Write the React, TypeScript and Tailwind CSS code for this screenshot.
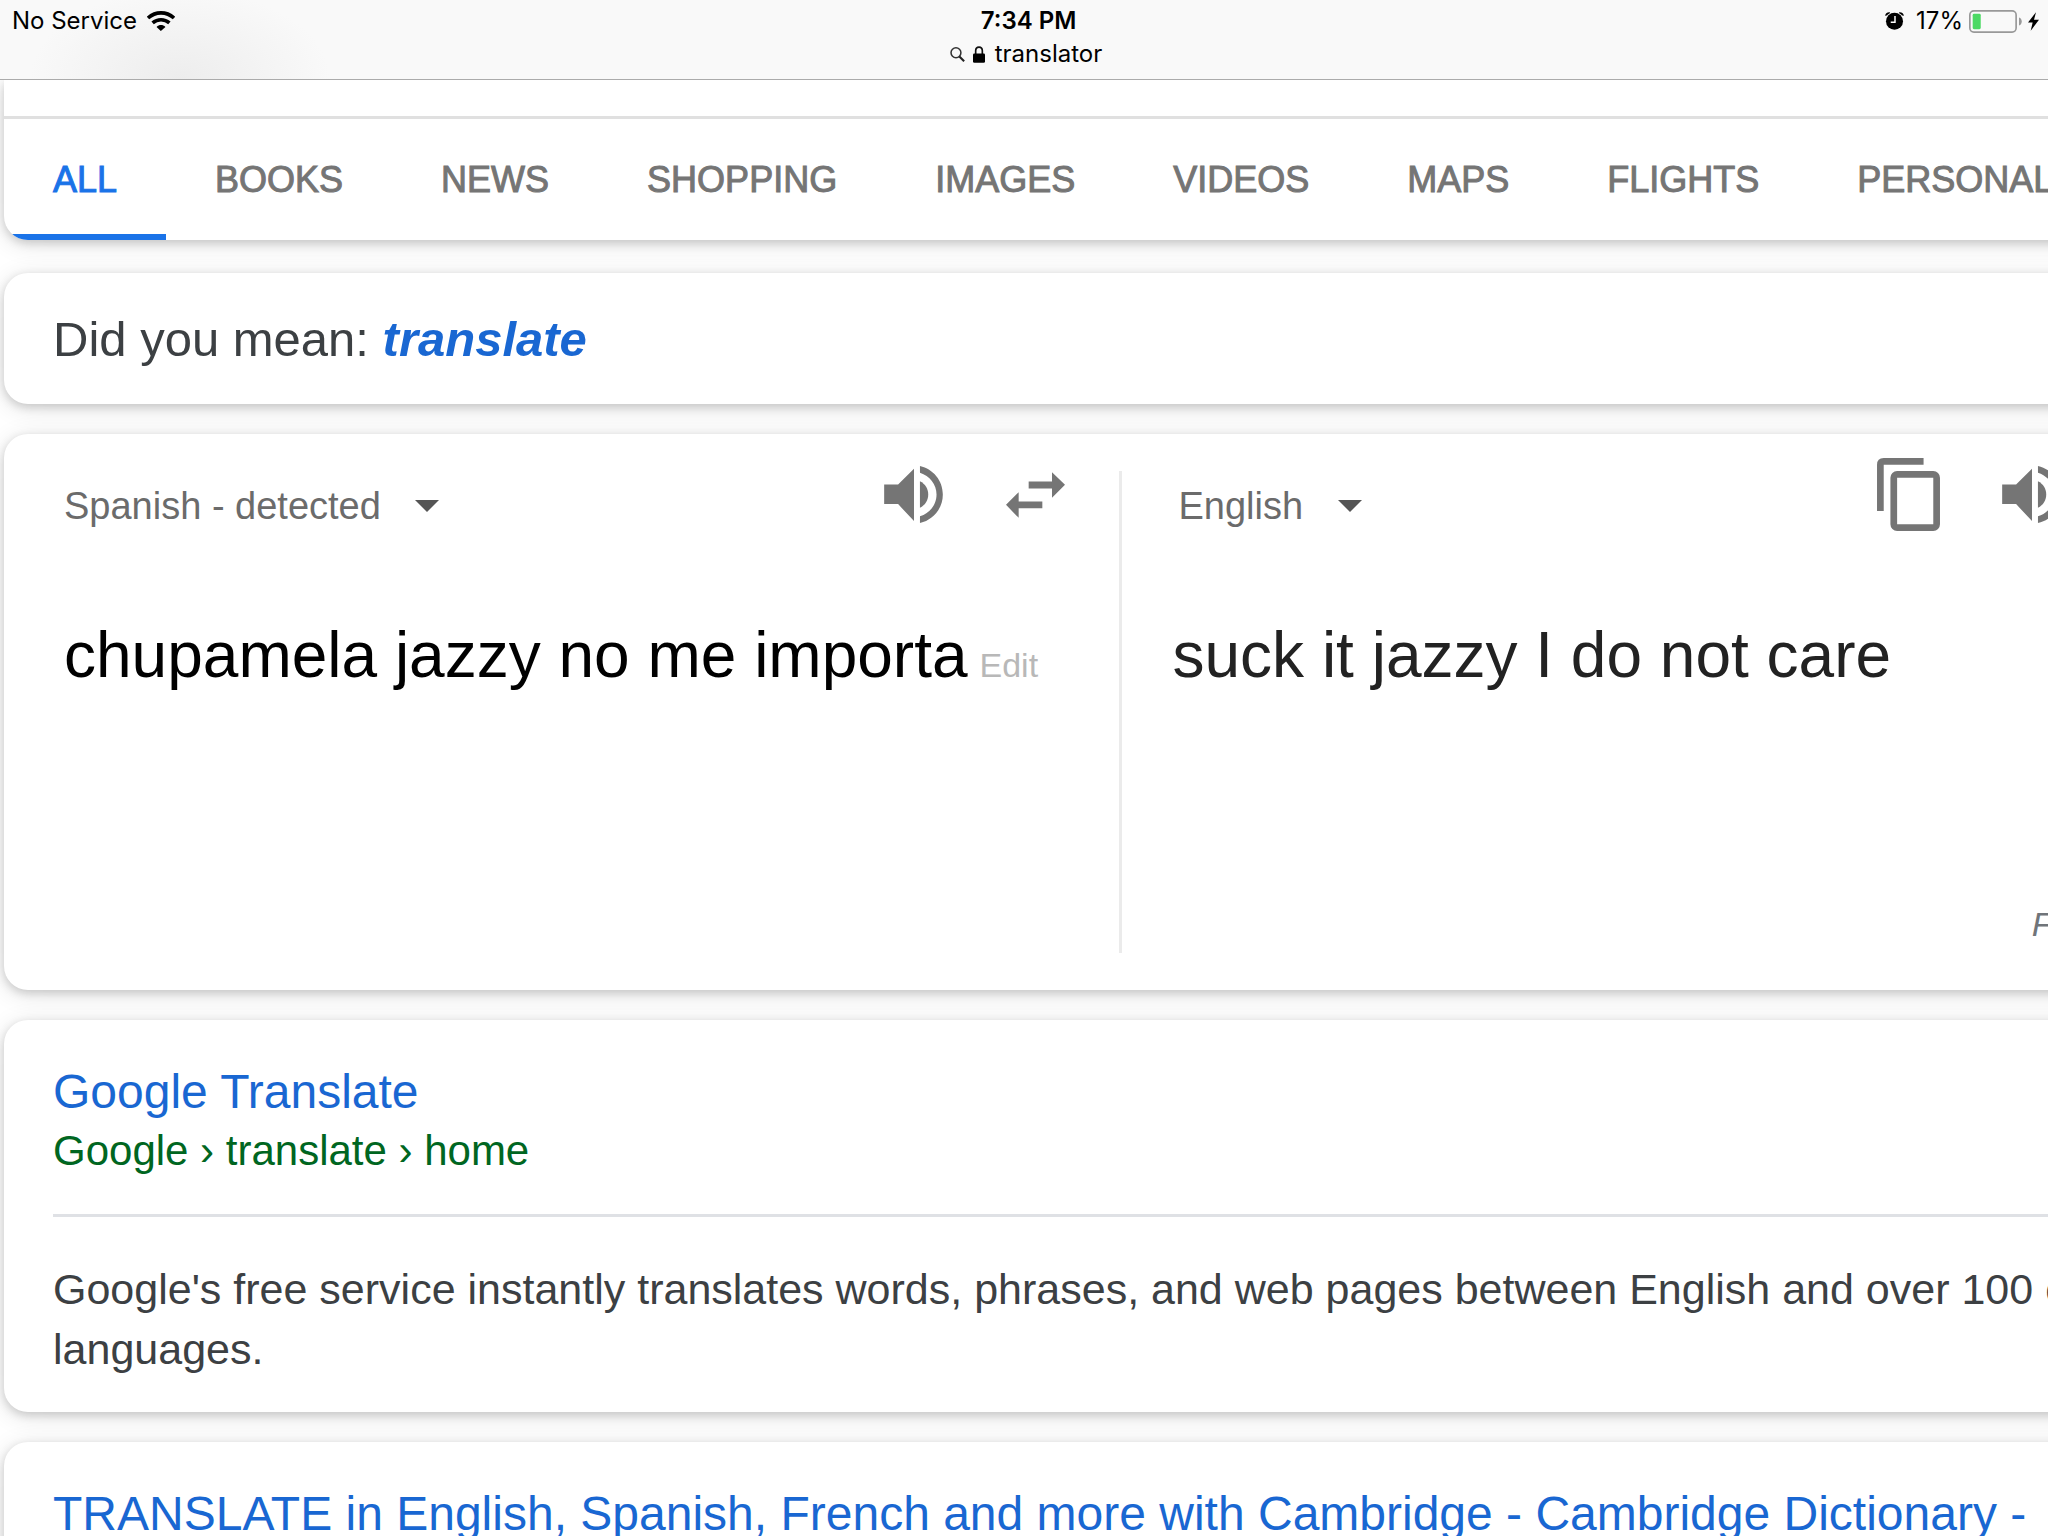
import type { ReactNode } from "react";
import { clsx } from "clsx";

const TABS = [
  "ALL",
  "BOOKS",
  "NEWS",
  "SHOPPING",
  "IMAGES",
  "VIDEOS",
  "MAPS",
  "FLIGHTS",
  "PERSONAL",
];

function WifiIcon() {
  return (
    <svg viewBox="0 0 85 60" className="h-5 w-7" fill="none" aria-hidden="true">
      <path d="M3 21C26 0 59 0 82 21" stroke="#000" strokeWidth="11" />
      <path d="M17 36C32 23 53 23 68 36" stroke="#000" strokeWidth="11" />
      <path d="M29 48C37 40 48 40 56 48L42 60z" fill="#000" />
    </svg>
  );
}

function SearchIcon() {
  return (
    <svg viewBox="0 0 43 44" className="h-[15px] w-[15px]" fill="none" aria-hidden="true">
      <circle cx="17" cy="17" r="14.5" stroke="#333" strokeWidth="4.5" />
      <path d="M27 28L41 42" stroke="#222" strokeWidth="6" />
    </svg>
  );
}

function LockIcon() {
  return (
    <svg viewBox="0 0 36 50" className="h-[17px] w-3" aria-hidden="true">
      <path d="M8 24V14C8 -1 28 -1 28 14V24" fill="none" stroke="#111" strokeWidth="5" />
      <rect y="22" width="36" height="28" rx="4" />
    </svg>
  );
}

function AlarmIcon() {
  return (
    <svg viewBox="0 0 57 55" className="h-[18px] w-[19px]" aria-hidden="true">
      <circle cx="28.5" cy="28.5" r="26" />
      <path d="M0 10C2 4 7 0 14 1L15 3L2 12zM57 10C55 4 50 0 43 1L42 3L55 12z" />
      <path d="M30 12V31H17" fill="none" stroke="#fff" strokeWidth="4.5" />
    </svg>
  );
}

function BatteryIcon() {
  return (
    <svg viewBox="0 0 158 68" className="h-[23px] w-[53px]" aria-hidden="true">
      <rect x="2.5" y="2.5" width="138" height="63" rx="12" fill="none" stroke="#999" strokeWidth="5" />
      <rect x="11" y="11" width="24" height="46" rx="4" fill="#4cd964" />
      <path d="M149 22C160 25 160 43 149 46z" fill="#999" />
    </svg>
  );
}

function BoltIcon() {
  return (
    <svg viewBox="0 0 33 56" className="h-[19px] w-[11px]" aria-hidden="true">
      <path d="M24 0L0 31H14L8 56L33 23H18z" />
    </svg>
  );
}

function SpeakerIcon() {
  return (
    <svg viewBox="0 0 177 172" className="h-[57px] w-[59px]" fill="#757575" aria-hidden="true">
      <path d="M0 56H42L90 8V166L42 115H0z" />
      <path d="M108 46C124 54 133 69 133 86S124 118 108 126z" />
      <path d="M108 0C148 9 177 44 177 86S148 163 108 172V152C137 143 158 117 158 86S137 29 108 20z" />
    </svg>
  );
}

function SwapIcon() {
  return (
    <svg viewBox="0 0 177 137" className="h-[46px] w-[59px]" fill="#757575" aria-hidden="true">
      <path d="M68 28H138V0L177 38L138 77V49H68z" />
      <path d="M109 88H38V60L0 98L38 137V108H109z" />
    </svg>
  );
}

function CopyIcon() {
  return (
    <svg viewBox="0 0 188 218" className="h-[73px] w-[63px]" fill="#757575" aria-hidden="true">
      <path d="M0 158V20Q0 0 20 0H139V20H20V158z" />
      <rect x="50" y="49" width="128" height="159" rx="10" fill="none" stroke="#757575" strokeWidth="20" />
    </svg>
  );
}

function Card({ className, children }: { className?: string; children: ReactNode }) {
  return (
    <section
      className={clsx(
        "w-[calc(100%+188px)] shrink-0 bg-white shadow-[0_4px_24px_rgba(0,0,0,0.12),0_3px_10px_rgba(0,0,0,0.16)]",
        className,
      )}
    >
      {children}
    </section>
  );
}

function LanguageSelect({ label, value }: { label: string; value: string }) {
  return (
    <label className="flex items-center gap-[34px] self-end">
      <select
        aria-label={label}
        className="appearance-none bg-transparent text-[38px] leading-[50px] text-[#6b6b6b]"
      >
        <option>{value}</option>
      </select>
      <svg viewBox="0 0 24 12" className="h-3 w-6" fill="#555" aria-hidden="true">
        <path d="M0 0H24L12 12z" />
      </svg>
    </label>
  );
}

function StatusBar() {
  return (
    <header className="relative z-10 shrink-0 border-b border-[#ababab] bg-[#f9f9f9] bg-[radial-gradient(ellipse_150px_90px_at_180px_100%,#ededed,transparent)] pt-[7px] pb-[11px] font-['Inter',sans-serif] text-2xl leading-7 text-black">
      <div className="grid grid-cols-[1fr_auto_1fr] items-center pr-[9px] pl-3">
        <div className="flex items-center gap-2.5">
          <span>No Service</span>
          <WifiIcon />
        </div>
        <span className="pl-1.5 font-semibold">7:34 PM</span>
        <div className="flex items-center justify-end gap-[6px]">
          <AlarmIcon />
          <span className="pl-1.5">17%</span>
          <BatteryIcon />
          <BoltIcon />
        </div>
      </div>
      <div className="mt-[5px] flex items-center justify-center pl-1">
        <SearchIcon />
        <span className="pr-2.5 pl-2">
          <LockIcon />
        </span>
        <span>translator</span>
      </div>
    </header>
  );
}

export default function App() {
  return (
    <div className="flex h-screen flex-col overflow-hidden bg-white font-['Liberation_Sans',Arial,sans-serif]">
      <StatusBar />

      <main className="flex flex-1 flex-col gap-[30px] pl-1">
        <Card className="overflow-hidden rounded-bl-3xl">
          <div className="box-content h-9 border-b-3 border-[#e0e0e0]" />
          <nav className="flex text-4xl">
            {TABS.map((tab, i) => (
              <a
                key={tab}
                href="#"
                className={clsx(
                  "border-b-6 px-[49px] pt-[37px] pb-[30px] leading-12 whitespace-nowrap [-webkit-text-stroke:1px]",
                  i === 0 ? "border-[#1a73e8] text-[#1a73e8]" : "border-transparent text-[#757575]",
                )}
              >
                {tab}
              </a>
            ))}
          </nav>
        </Card>

        <Card className="mt-[3px] rounded-l-3xl px-[49px] pt-9 pb-[35px]">
          <p className="text-[49px] leading-[60px] text-[#3c4043]">
            Did you mean:{" "}
            <a href="#" className="font-bold text-[#1967d2] italic">
              translate
            </a>
          </p>
        </Card>

        <Card className="grid min-h-[556px] grid-cols-[1fr_3px_1fr] rounded-l-3xl">
          <div className="pt-6 pr-[54px] pl-[60px]">
            <div className="flex h-[73px] items-center gap-[63px]">
              <LanguageSelect label="Source language" value="Spanish - detected" />
              <button type="button" aria-label="Listen" className="ml-auto">
                <SpeakerIcon />
              </button>
              <button type="button" aria-label="Swap languages">
                <SwapIcon />
              </button>
            </div>
            <p className="mt-[84px] text-[64px] leading-20 whitespace-nowrap text-black">
              chupamela jazzy no me importa
              <button type="button" className="ml-3 text-[34px] text-[#b8b8b8]">
                Edit
              </button>
            </p>
          </div>
          <div className="my-[37px] bg-[#ebebeb]" />
          <div className="flex flex-col pt-6 pb-[46px] pl-[51px]">
            <div className="flex h-[73px] items-center gap-[62px] pr-[175px] pl-1.5">
              <LanguageSelect label="Target language" value="English" />
              <button type="button" aria-label="Copy" className="ml-auto">
                <CopyIcon />
              </button>
              <button type="button" aria-label="Listen">
                <SpeakerIcon />
              </button>
            </div>
            <p className="mt-[84px] text-[64px] leading-20 text-[#222]">
              suck it jazzy I do not care
            </p>
            <a
              href="#"
              className="mt-auto mr-[55px] self-end text-[34px] leading-10 text-[#70757a] italic"
            >
              Feedback
            </a>
          </div>
        </Card>

        <Card className="rounded-l-3xl px-[49px] pt-[41px] pb-[33px]">
          <a href="#" className="block">
            <h3 className="text-5xl leading-[62px] text-[#1967d2]">Google Translate</h3>
            <p className="text-[42px] leading-14 text-[#006621]">Google › translate › home</p>
          </a>
          <hr className="mt-[35px] border-t-3 border-[#dfe1e5]" />
          <p className="mt-[42px] text-[43px] leading-[60px] text-[#3c4043]">
            Google's free service instantly translates words, phrases, and web pages between English
            and over 100 other languages.
          </p>
        </Card>

        <Card className="rounded-tl-3xl px-[49px] pt-[41px] pb-[33px]">
          <a href="#" className="block">
            <h3 className="text-5xl leading-[62px] whitespace-nowrap text-[#1967d2]">
              TRANSLATE in English, Spanish, French and more with Cambridge - Cambridge Dictionary -
            </h3>
          </a>
        </Card>
      </main>
    </div>
  );
}
